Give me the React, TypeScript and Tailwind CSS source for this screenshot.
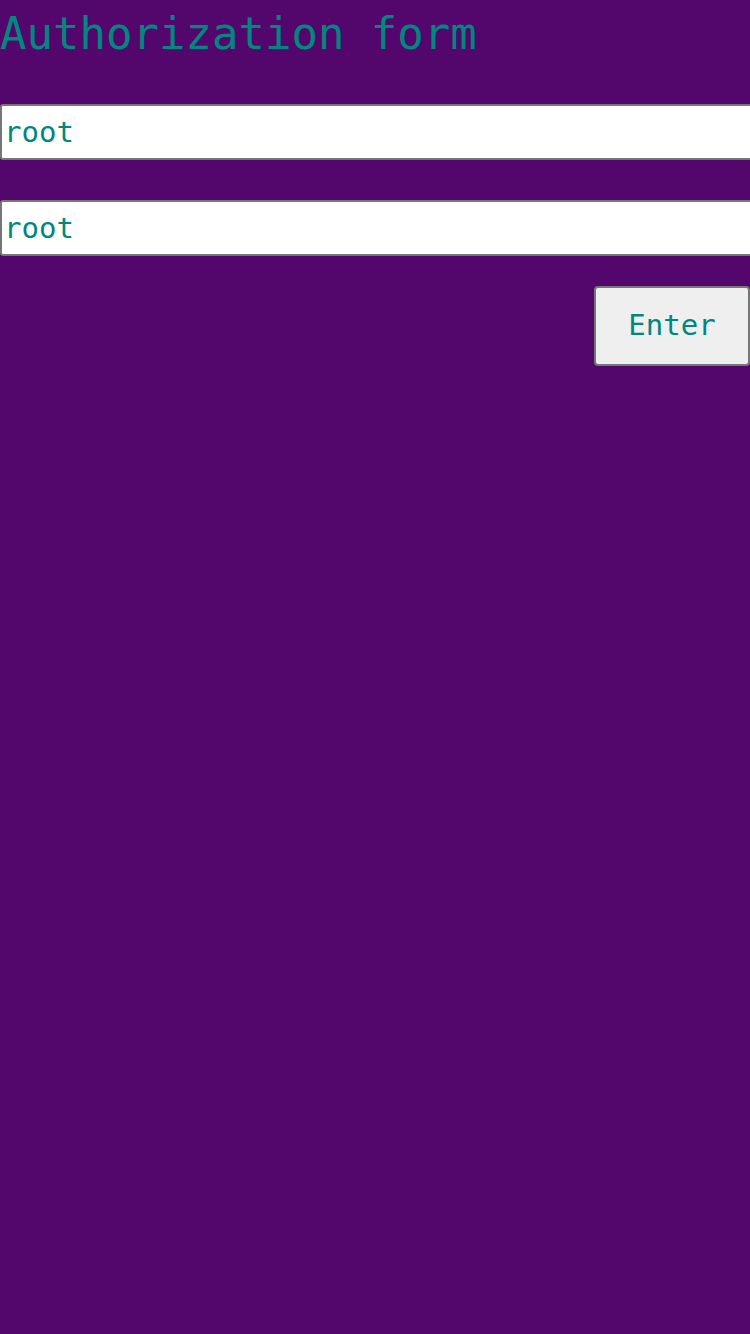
export default function App() {
  return (
    <div className="min-h-[1334px] w-[750px] overflow-hidden bg-[#53076d] font-['DejaVu_Sans_Mono',monospace] text-[#00877f]">
      <h1 className="m-0 pt-[4px] text-[44px] leading-[60px] font-normal">Authorization form</h1>
      <div className="mt-[40px] flex flex-col">
        <input
          defaultValue="root"
          className="box-border h-[56px] w-[770px] rounded-[3px] border-2 border-[#767676] bg-white px-[2px] text-[29px] text-[#00877f] outline-none"
        />
        <input
          defaultValue="root"
          className="mt-[40px] box-border h-[56px] w-[770px] rounded-[3px] border-2 border-[#767676] bg-white px-[2px] text-[29px] text-[#00877f] outline-none"
        />
        <div className="mt-[30px] flex justify-end">
          <button className="box-border h-[80px] w-[156px] rounded-[4px] border-2 border-[#767676] bg-[#efefef] text-[29px] text-[#00877f]">
            Enter
          </button>
        </div>
      </div>
    </div>
  );
}
